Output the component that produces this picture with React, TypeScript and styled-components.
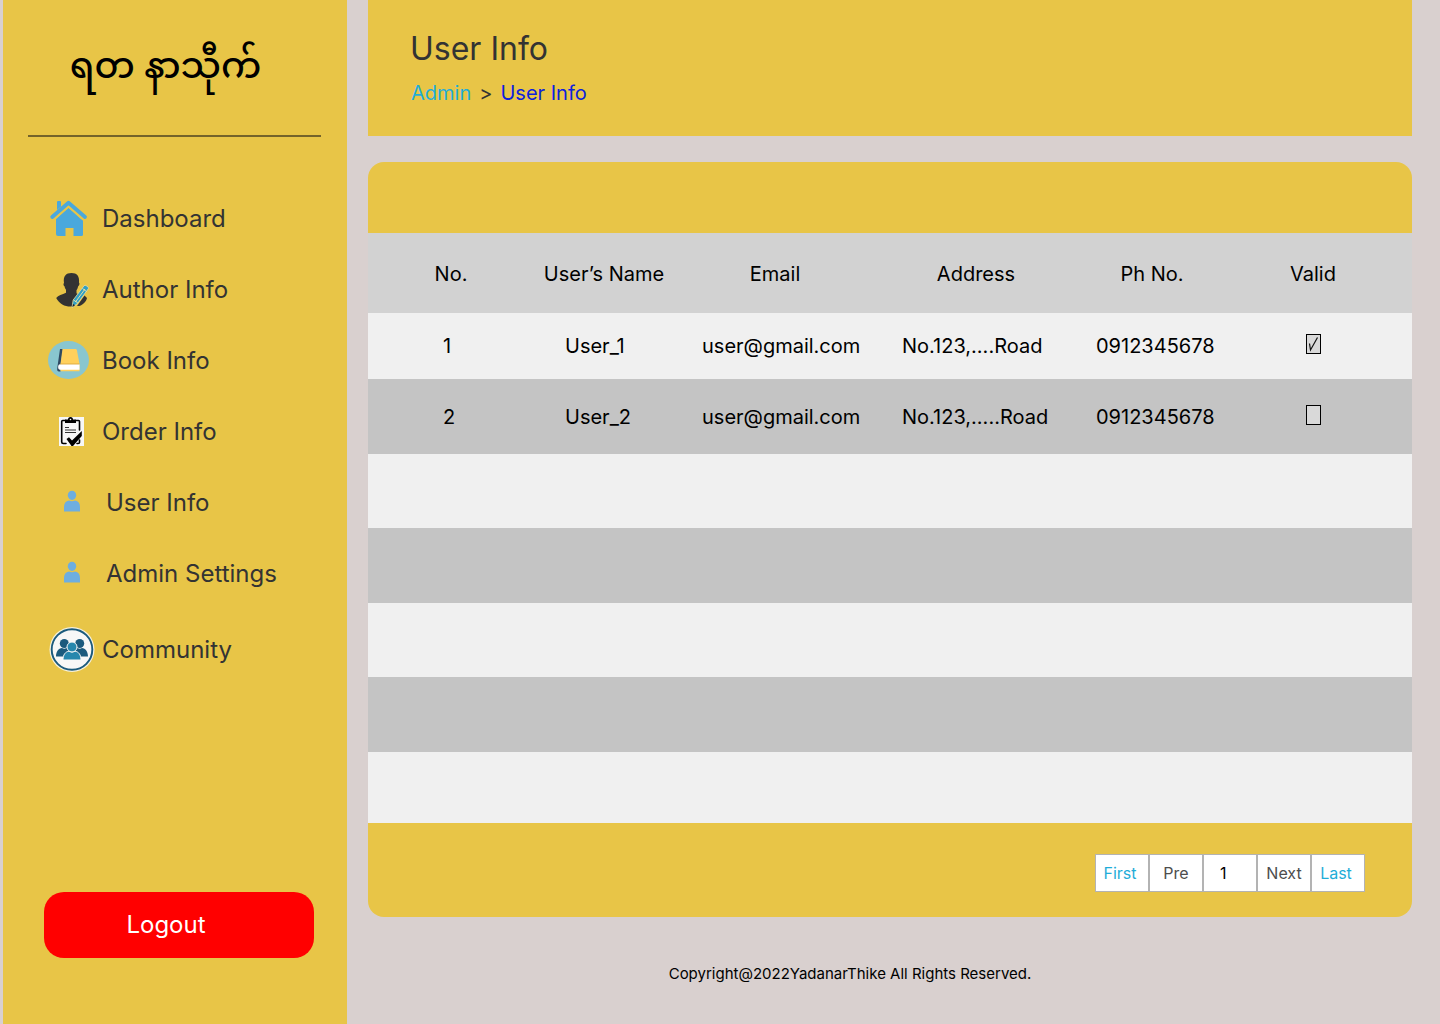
import React, { useState } from "react";
import styled, { createGlobalStyle } from "styled-components";

const gold = "#e8c547";
const ink = "#333333";

const GlobalStyle = createGlobalStyle`
  *, *::before, *::after { box-sizing: border-box; }
  body {
    margin: 0;
    background: #d9d0cf;
    color: #000;
    font-family: Inter, "Liberation Sans", sans-serif;
  }
  button, input { font: inherit; }
`;

const Page = styled.div`
  display: flex;
  gap: 21px;
  min-height: 100vh;
  padding: 0 28px 0 3px;
`;

const Sidebar = styled.aside`
  display: flex;
  flex-direction: column;
  flex: 0 0 344px;
  background: ${gold};
`;

const Brand = styled.div`
  display: flex;
  align-items: center;
  justify-content: center;
  height: 137px;
  margin: 0 26px 0 25px;
  padding: 4px 18px 0 0;
  border-bottom: 2px solid #74632a;
  color: #000;
  font-family: "Noto Sans Myanmar", "Noto Sans", sans-serif;
  font-size: 36px;
  font-weight: 500;
  line-height: 56px;
`;

const Nav = styled.nav`
  display: flex;
  flex-direction: column;
  gap: 5px;
  padding: 46px 24px 0 45px;
`;

const NavList = styled.ul`
  margin: 0;
  padding: 0;
  list-style: none;
`;

const NavLink = styled.a<{ $indent?: boolean }>`
  display: flex;
  align-items: center;
  gap: ${(p) => (p.$indent ? 10 : 6)}px;
  height: 71px;
  color: ${ink};
  font-size: 24px;
  line-height: 32px;
  text-decoration: none;
`;

const Icon = styled.svg`
  flex: none;
  width: 48px;
  height: 48px;
`;

const LogoutButton = styled.button`
  height: 66px;
  margin: auto 33px 66px 41px;
  padding: 0 26px 2px 0;
  border: 0;
  border-radius: 20px;
  background: #ff0000;
  color: #fff;
  font-size: 24px;
  cursor: pointer;
`;

const Main = styled.main`
  display: flex;
  flex: 1;
  flex-direction: column;
  min-width: 0;
`;

const PageHeader = styled.header`
  height: 136px;
  padding: 29px 42px 0;
  background: ${gold};
`;

const Title = styled.h1`
  margin: 0;
  color: ${ink};
  font-size: 32px;
  font-weight: 400;
  line-height: 40px;
`;

const Breadcrumb = styled.nav`
  display: flex;
  gap: 8px;
  margin-top: 11px;
  padding-left: 1px;
  color: ${ink};
  font-size: 20px;
  line-height: 26px;
`;

const Crumb = styled.a<{ $current?: boolean }>`
  color: ${(p) => (p.$current ? "#0d21dd" : "#1fadd8")};
  text-decoration: none;
`;

const Card = styled.section`
  margin-top: 26px;
  padding-top: 71px;
  overflow: hidden;
  border-radius: 16px;
  background: ${gold};
`;

const Table = styled.table`
  width: 100%;
  border-collapse: collapse;
  table-layout: fixed;
  font-size: 20px;
  line-height: 24px;
`;

const Row = styled.tr<{ $height: number; $shaded?: boolean }>`
  height: ${(p) => p.$height}px;
  background: ${(p) => (p.$shaded ? "#c4c4c4" : "#f0f0f0")};
`;

const HeadRow = styled.tr`
  height: 80px;
  background: #d2d2d2;
`;

const HeadCell = styled.th<{ $width: number }>`
  width: ${(p) => p.$width}px;
  padding: 2px 0 0;
  font-weight: 400;
  text-align: center;

  &:last-child { padding-right: 14px; }
`;

const Cell = styled.td<{ $inset: number }>`
  padding: 0 0 0 ${(p) => p.$inset}px;
  text-align: left;
  white-space: nowrap;
`;

const CheckCell = styled.td`
  padding: 0 14px 4px 0;
`;

const CheckLabel = styled.label`
  display: grid;
  justify-content: center;
`;

const CheckInput = styled.input`
  grid-area: 1 / 1;
  width: 15px;
  height: 20px;
  margin: 0;
  appearance: none;
  border: 1px solid #000;
  background: #d9d9d9;
`;

const CheckMark = styled.svg`
  grid-area: 1 / 1;
  width: 15px;
  height: 20px;
  pointer-events: none;
`;

const CardFooter = styled.div`
  display: flex;
  justify-content: flex-end;
  height: 94px;
  padding: 31px 47px 0 0;
`;

const Pager = styled.div`
  display: flex;
  height: 38px;
  font-size: 16px;
`;

const PagerButton = styled.button<{ $edge?: boolean }>`
  width: 54px;
  padding: 0 ${(p) => (p.$edge ? 4 : 0)}px 0 0;
  border: 1px solid #b3b3b3;
  background: #fff;
  color: ${(p) => (p.$edge ? "#1fadd8" : "#4d4d4d")};
  cursor: pointer;
`;

const PagerInput = styled.input`
  width: 54px;
  padding: 0 16px;
  border: 1px solid #b3b3b3;
  border-radius: 0;
  background: #fff;
  color: #000;
`;

const Copyright = styled.footer`
  padding: 46px 80px 36px 0;
  font-size: 15px;
  line-height: 22px;
  text-align: center;
`;

const HomeIcon = () => (
  <Icon viewBox="0 0 48 48" aria-hidden="true" fill="#4aa8dc">
    <path d="M8 24 20.500 12.800 33 24V39.500a1.500 1.500 0 0 1-1.500 1.500H25.500v-8h-8v8H10A2 2 0 0 1 8 39Z" />
    <path d="M33 24 35 25.500V39.500q0 1.500-1.500 1.500H31V24Z" />
    <path d="M9 7q0-1 1-1h2q1 0 1 1v4.500L9 15Z" />
    <path d="M4.200 22 20.500 7.800 37 22" fill="none" stroke="#4aa8dc" strokeWidth="3.800" strokeLinecap="round" strokeLinejoin="round" />
    <path d="M6.500 24.200 20.500 12 35.500 25" fill="none" stroke={gold} strokeWidth="1.500" />
  </Icon>
);

const AuthorIcon = () => (
  <Icon viewBox="0 0 48 48" aria-hidden="true">
    <path
      fill="#333"
      d="M16 17c-1-7 2-10 7.500-10S31.500 10 31 16.500c1 1 .3 3-.8 3.800-.5 2-1 3-1.700 4v3l4 2.200-6.500 10.700c-7 1.500-14-1.200-17.800-8.200 2-2.700 6-3.500 9.800-5.200v-3c-.7-.7-1.200-2-1.500-3.500-1-.7-1.500-2.300-.5-3.300Z"
    />
    <path fill="#333" d="m36.500 29.500 2.500 2.500c-.7 3-2.700 5.800-7.500 8H29Z" />
    <path fill="#2f9fc4" stroke="#e9dda0" strokeWidth=".8" d="m24 41.500 1.200-7.500L36 19.800q1-1 2-.3l2 1.500q1 .8.300 1.800L29.500 37.500Z" />
    <path fill="none" stroke="#f3e6a5" strokeWidth=".9" d="m27.500 36 9.500-13M34.500 22.500l4 3M25.800 34.200l4 2.700" />
    <path fill="#222" d="m24.500 41 .5-3 2 1.300Z" />
  </Icon>
);

const BookIcon = () => (
  <Icon viewBox="0 0 48 48" aria-hidden="true">
    <ellipse cx="20.500" cy="23" rx="20.500" ry="19" fill="#89c6cf" />
    <path fill="#2f4961" d="M12 12h3l-2.500 16v6.500H11c-1.500 0-2-1-1.800-3Z" />
    <path fill="#ffd05b" d="M14.500 12h12.700c1 0 1.500.4 1.700 1.200L31.500 27v7.200H12.500V27Z" />
    <path fill="#fff" d="M12 27.300h19.500v5.500H12c-2.500 0-2.500-5.500 0-5.500Z" />
    <path stroke="#c9962f" strokeWidth=".6" d="M12 27h19.500" />
  </Icon>
);

const OrderIcon = () => (
  <Icon viewBox="0 0 48 48" aria-hidden="true">
    <path fill="#f7f7f7" d="M11 9h25v29H11Z" />
    <path fill="none" stroke="#000" strokeWidth="1.600" strokeLinecap="round" d="M17.500 12.500h-2.800q-1 0-1 1V34q0 1.500 1.500 1.500H18M28 12.500h2.500q1 0 1 1V22M31.500 32v2.500q0 1-1.500 1h-1" />
    <path fill="#000" d="M17 11.500h3q0-2.500 2.500-2.500t2.500 2.500h3V15H17Z" />
    <circle cx="22.500" cy="11.500" r=".8" fill="#fff" />
    <path stroke="#333" strokeWidth="1" d="M17 19.500h4M17 22h11M17 24.500h11" />
    <path fill="#000" d="m18.500 31 2.500-1.700 3 3.200 9.800-9.500v5L25 38h-1.500Z" />
  </Icon>
);

const PersonIcon = () => (
  <Icon viewBox="0 0 48 48" aria-hidden="true" fill="#6eaee0">
    <ellipse cx="24" cy="16.300" rx="4.200" ry="4.600" />
    <path d="M16 32.500V28q0-5.800 5-6.500 3 1.500 6 0Q32 22.200 32 28v4.500Z" />
  </Icon>
);

const CommunityIcon = () => (
  <Icon viewBox="0 0 48 48" aria-hidden="true">
    <circle cx="24" cy="23.500" r="22.500" fill="#f6f1dc" />
    <circle cx="24" cy="23.500" r="20.300" fill="#f7f7f7" stroke="#1b5a7d" strokeWidth="1.900" />
    <g fill="#1b5a7d">
      <circle cx="16.300" cy="17.500" r="4.500" />
      <circle cx="31.700" cy="17.500" r="4.500" />
      <path d="M8 30.500c0-5 2.500-8 6-8.500q2.300 1.500 4.500 0c3 .5 4 3 4 8.500ZM40 30.500c0-5-2.500-8-6-8.500q-2.300 1.500-4.500 0c-3 .5-4 3-4 8.500Z" />
    </g>
    <g fill="#2687ad" stroke="#f7f7f7" strokeWidth="1">
      <path d="M15 34c0-5.500 2.500-8.300 6-8.800q3 1.800 6 0c3.500.5 6 3.300 6 8.800Z" />
      <circle cx="24" cy="21" r="5" />
    </g>
  </Icon>
);

const mainLinks = [
  { label: "Dashboard", icon: HomeIcon },
  { label: "Author Info", icon: AuthorIcon },
  { label: "Book Info", icon: BookIcon },
  { label: "Order Info", icon: OrderIcon },
  { label: "User Info", icon: PersonIcon, indent: true },
  { label: "Admin Settings", icon: PersonIcon, indent: true },
];

const columns = [
  { title: "No.", width: 166 },
  { title: "User’s Name", width: 140 },
  { title: "Email", width: 202 },
  { title: "Address", width: 200 },
  { title: "Ph No.", width: 152 },
  { title: "Valid", width: 184 },
];

const users = [
  { no: 1, name: "User_1", email: "user@gmail.com", address: "No.123,....Road", phone: "0912345678", valid: true, height: 66 },
  { no: 2, name: "User_2", email: "user@gmail.com", address: "No.123,.....Road", phone: "0912345678", valid: false, height: 75 },
];

const emptyRows = [74, 75, 74, 75, 71];

function ValidBox({ name, initial }: { name: string; initial: boolean }) {
  const [checked, setChecked] = useState(initial);
  return (
    <CheckLabel>
      <CheckInput
        type="checkbox"
        aria-label={`${name} valid`}
        checked={checked}
        onChange={(e) => setChecked(e.target.checked)}
      />
      {checked && (
        <CheckMark viewBox="0 0 15 20" aria-hidden="true">
          <path d="M3.500 9.500 4.500 16 11.500 3.500" fill="none" stroke="#111" strokeWidth="1.200" />
        </CheckMark>
      )}
    </CheckLabel>
  );
}

export default function App() {
  const [page, setPage] = useState("1");
  return (
    <>
      <GlobalStyle />
      <Page>
        <Sidebar>
          <Brand lang="my">ရတ နာသီုက်</Brand>
          <Nav aria-label="Main">
            <NavList>
              {mainLinks.map(({ label, icon: Glyph, indent }) => (
                <li key={label}>
                  <NavLink href="#" $indent={indent}>
                    <Glyph />
                    {label}
                  </NavLink>
                </li>
              ))}
            </NavList>
            <NavList>
              <li>
                <NavLink href="#">
                  <CommunityIcon />
                  Community
                </NavLink>
              </li>
            </NavList>
          </Nav>
          <LogoutButton type="button">Logout</LogoutButton>
        </Sidebar>
        <Main>
          <PageHeader>
            <Title>User Info</Title>
            <Breadcrumb aria-label="Breadcrumb">
              <Crumb href="#">Admin</Crumb>
              <span>&gt;</span>
              <Crumb href="#" $current>User Info</Crumb>
            </Breadcrumb>
          </PageHeader>
          <Card>
            <Table>
              <thead>
                <HeadRow>
                  {columns.map((c) => (
                    <HeadCell key={c.title} $width={c.width} scope="col">{c.title}</HeadCell>
                  ))}
                </HeadRow>
              </thead>
              <tbody>
                {users.map((u, i) => (
                  <Row key={u.no} $height={u.height} $shaded={i % 2 === 1}>
                    <Cell $inset={75}>{u.no}</Cell>
                    <Cell $inset={31}>{u.name}</Cell>
                    <Cell $inset={28}>{u.email}</Cell>
                    <Cell $inset={26}>{u.address}</Cell>
                    <Cell $inset={20}>{u.phone}</Cell>
                    <CheckCell>
                      <ValidBox name={u.name} initial={u.valid} />
                    </CheckCell>
                  </Row>
                ))}
                {emptyRows.map((height, i) => (
                  <Row key={i} $height={height} $shaded={i % 2 === 1}>
                    <td colSpan={6} />
                  </Row>
                ))}
              </tbody>
            </Table>
            <CardFooter>
              <Pager>
                <PagerButton type="button" $edge>First</PagerButton>
                <PagerButton type="button">Pre</PagerButton>
                <PagerInput aria-label="Page" value={page} onChange={(e) => setPage(e.target.value)} />
                <PagerButton type="button">Next</PagerButton>
                <PagerButton type="button" $edge>Last</PagerButton>
              </Pager>
            </CardFooter>
          </Card>
          <Copyright>Copyright@2022YadanarThike All Rights Reserved.</Copyright>
        </Main>
      </Page>
    </>
  );
}
